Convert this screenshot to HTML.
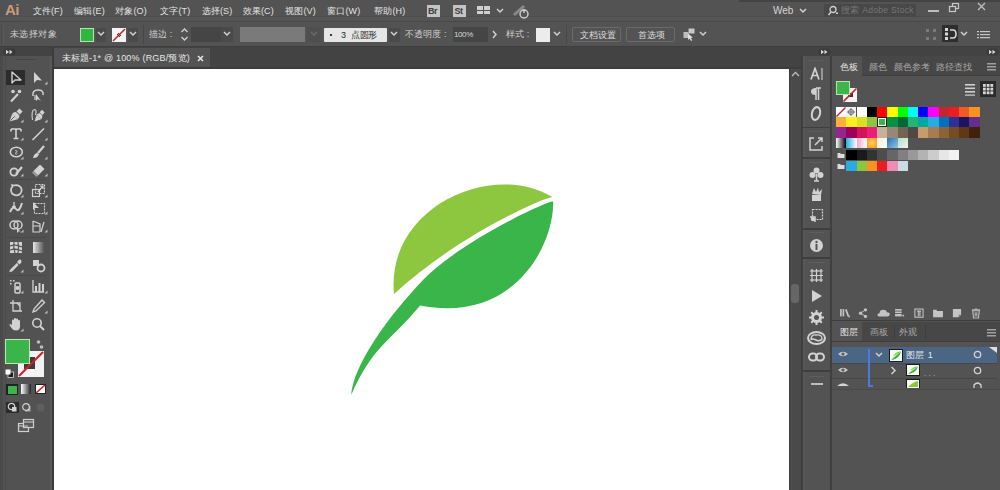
<!DOCTYPE html>
<html><head><meta charset="utf-8">
<style>
*{margin:0;padding:0;box-sizing:border-box}
html,body{width:1000px;height:490px;overflow:hidden;background:#535353;font-family:"Liberation Sans",sans-serif;color:#e0e0e0;font-size:10px}
.a{position:absolute}
.t{position:absolute;white-space:nowrap;font-weight:500}
</style></head><body>
<div class="a" style="left:0px;top:0px;width:1000px;height:22px;background:#535353;"></div>
<div class="a" style="left:0px;top:16px;width:1000px;height:1px;background:#4d4d4d;"></div>
<div class="a" style="left:0px;top:17px;width:1000px;height:3px;background:#565656;"></div>
<div class="a" style="left:0px;top:21px;width:1000px;height:1px;background:#4a4a4a;"></div>
<div class="a" style="left:0px;top:22px;width:1000px;height:1px;background:#454545;"></div>
<div class="a" style="left:0px;top:0px;width:22px;height:17px;background:#4f5257;"></div>
<div class="t" style="left:5px;top:1.5px;font-size:15px;line-height:16px;color:#d09a72;font-weight:bold;letter-spacing:-0.5px">Ai</div>
<div class="t" style="left:32.5px;top:6.0px;font-size:9px;line-height:10px;color:#e2e2e2;letter-spacing:0.2px">文件(F)</div>
<div class="t" style="left:74px;top:6.0px;font-size:9px;line-height:10px;color:#e2e2e2;letter-spacing:0.2px">编辑(E)</div>
<div class="t" style="left:115px;top:6.0px;font-size:9px;line-height:10px;color:#e2e2e2;letter-spacing:0.2px">对象(O)</div>
<div class="t" style="left:160px;top:6.0px;font-size:9px;line-height:10px;color:#e2e2e2;letter-spacing:0.2px">文字(T)</div>
<div class="t" style="left:201.5px;top:6.0px;font-size:9px;line-height:10px;color:#e2e2e2;letter-spacing:0.2px">选择(S)</div>
<div class="t" style="left:242.5px;top:6.0px;font-size:9px;line-height:10px;color:#e2e2e2;letter-spacing:0.2px">效果(C)</div>
<div class="t" style="left:285px;top:6.0px;font-size:9px;line-height:10px;color:#e2e2e2;letter-spacing:0.2px">视图(V)</div>
<div class="t" style="left:327px;top:6.0px;font-size:9px;line-height:10px;color:#e2e2e2;letter-spacing:0.2px">窗口(W)</div>
<div class="t" style="left:374px;top:6.0px;font-size:9px;line-height:10px;color:#e2e2e2;letter-spacing:0.2px">帮助(H)</div>
<div class="a" style="left:427px;top:4.5px;width:13px;height:12.5px;background:#c4c4c4;"></div>
<div class="t" style="left:428px;top:6.0px;font-size:9px;line-height:10px;color:#3e3e3e;font-weight:bold;letter-spacing:-0.5px">Br</div>
<div class="a" style="left:453px;top:4.5px;width:13px;height:12.5px;background:#c4c4c4;"></div>
<div class="t" style="left:454.5px;top:6.0px;font-size:9px;line-height:10px;color:#3e3e3e;font-weight:bold;letter-spacing:-0.5px">St</div>
<div class="a" style="left:477px;top:6px;width:6px;height:3.5px;background:#cfcfcf;"></div>
<div class="a" style="left:484px;top:6px;width:6px;height:3.5px;background:#cfcfcf;"></div>
<div class="a" style="left:477px;top:10.5px;width:6px;height:3.5px;background:#cfcfcf;"></div>
<div class="a" style="left:484px;top:10.5px;width:6px;height:3.5px;background:#cfcfcf;"></div>
<svg class="a" style="left:496px;top:8px;" width="8" height="6" viewBox="0 0 8 6"><path d="M1,1 L4,4 L7,1" stroke="#d0d0d0" stroke-width="1.5" fill="none"/></svg>
<svg class="a" style="left:512px;top:3px;" width="19" height="16" viewBox="0 0 19 16"><path d="M2,12 L12,3" stroke="#8a8a8a" stroke-width="3"/><circle cx="12" cy="11" r="4" stroke="#d0d0d0" stroke-width="1.4" fill="#535353"/><path d="M12,6 V10" stroke="#d0d0d0" stroke-width="1.4"/></svg>
<div class="t" style="left:773px;top:4.5px;font-size:10px;line-height:11px;color:#d4d4d4;">Web</div>
<svg class="a" style="left:799px;top:8px;" width="8" height="6" viewBox="0 0 8 6"><path d="M1,1 L4,4 L7,1" stroke="#d0d0d0" stroke-width="1.5" fill="none"/></svg>
<div class="a" style="left:824px;top:4px;width:92px;height:13px;background:#484848;border-radius:1px"></div>
<svg class="a" style="left:826px;top:4px;" width="14" height="13" viewBox="0 0 14 13"><circle cx="7" cy="5.5" r="3" stroke="#d0d0d0" stroke-width="1.3" fill="none"/><path d="M5,8 L2.5,11" stroke="#d0d0d0" stroke-width="1.5"/><rect x="10" y="8.5" width="2" height="1.5" fill="#d0d0d0"/></svg>
<div class="t" style="left:841px;top:5.8px;font-size:8.5px;line-height:9.5px;color:#767676;letter-spacing:0.3px">搜索 Adobe Stock</div>
<div class="a" style="left:739px;top:0px;width:261px;height:1.5px;background:#444;"></div>
<div class="a" style="left:928px;top:9.5px;width:11px;height:2px;background:#bdbdbd;"></div>
<svg class="a" style="left:948px;top:2px;" width="13" height="12" viewBox="0 0 13 12"><rect x="4.5" y="1.5" width="6" height="5" stroke="#c8c8c8" stroke-width="1.2" fill="none"/><rect x="1.5" y="4.5" width="6" height="5" stroke="#c8c8c8" stroke-width="1.2" fill="#535353"/></svg>
<svg class="a" style="left:976px;top:1px;" width="11" height="11" viewBox="0 0 11 11"><path d="M2,2 L9,9 M9,2 L2,9" stroke="#bdbdbd" stroke-width="1.3"/></svg>
<div class="a" style="left:0px;top:22px;width:1000px;height:24px;background:#535353;"></div>
<div class="a" style="left:0px;top:46px;width:1000px;height:1px;background:#3e3e3e;"></div>
<div class="a" style="left:1px;top:25px;width:1px;height:19px;background:#484848;"></div>
<div class="a" style="left:3px;top:25px;width:1px;height:19px;background:#5a5a5a;"></div>
<div class="t" style="left:9.5px;top:29.0px;font-size:9px;line-height:10px;color:#cfcfcf;letter-spacing:0.6px">未选择对象</div>
<div class="a" style="left:80px;top:28px;width:14px;height:14px;background:#2fb740;border:1px solid #b8e2b0"></div>
<div class="a" style="left:96px;top:28px;width:10px;height:14px;background:#4a4a4a;"></div>
<svg class="a" style="left:97px;top:31px;" width="8" height="6" viewBox="0 0 8 6"><path d="M1,1 L4,4 L7,1" stroke="#d0d0d0" stroke-width="1.5" fill="none"/></svg>
<svg class="a" style="left:112px;top:28px;" width="14" height="14" viewBox="0 0 14 14"><rect x="0" y="0" width="14" height="14" fill="#f4f4f4"/><path d="M1,13 L13,1" stroke="#c0282d" stroke-width="1.6"/><path d="M5,6 L8,9 M6,5 L9,8" stroke="#8a1a1a" stroke-width="1"/></svg>
<div class="a" style="left:128px;top:28px;width:10px;height:14px;background:#4a4a4a;"></div>
<svg class="a" style="left:129px;top:31px;" width="8" height="6" viewBox="0 0 8 6"><path d="M1,1 L4,4 L7,1" stroke="#d0d0d0" stroke-width="1.5" fill="none"/></svg>
<div class="a" style="left:143px;top:25px;width:1px;height:19px;background:#474747;"></div>
<div class="t" style="left:149px;top:29.0px;font-size:9px;line-height:10px;color:#cfcfcf;letter-spacing:0.1px">描边 :</div>
<svg class="a" style="left:180px;top:27px;" width="9" height="15" viewBox="0 0 9 15"><path d="M1.5,5 L4.5,2 L7.5,5 M1.5,10 L4.5,13 L7.5,10" stroke="#d0d0d0" stroke-width="1.4" fill="none"/></svg>
<div class="a" style="left:191px;top:27px;width:30px;height:15px;background:#454545;"></div>
<div class="a" style="left:221px;top:27px;width:12px;height:15px;background:#4a4a4a;"></div>
<svg class="a" style="left:223px;top:31px;" width="8" height="6" viewBox="0 0 8 6"><path d="M1,1 L4,4 L7,1" stroke="#d0d0d0" stroke-width="1.5" fill="none"/></svg>
<div class="a" style="left:240px;top:27px;width:65px;height:15px;background:#7a7a7a;"></div>
<div class="a" style="left:307px;top:27px;width:14px;height:15px;background:#4f4f4f;"></div>
<svg class="a" style="left:310px;top:31px;" width="8" height="6" viewBox="0 0 8 6"><path d="M1,1 L4,4 L7,1" stroke="#6a6a6a" stroke-width="1.5" fill="none"/></svg>
<div class="a" style="left:324px;top:28px;width:63px;height:14px;background:#e6e6e6;border-radius:1px"></div>
<div class="a" style="left:330px;top:34px;width:2px;height:2px;background:#3a3a3a;"></div>
<div class="t" style="left:341px;top:30.0px;font-size:9px;line-height:10px;color:#2a2a2a;">3</div>
<div class="t" style="left:351px;top:30.0px;font-size:9px;line-height:10px;color:#2a2a2a;letter-spacing:-0.3px">点圆形</div>
<div class="a" style="left:389px;top:28px;width:11px;height:14px;background:#4a4a4a;"></div>
<svg class="a" style="left:390px;top:31px;" width="8" height="6" viewBox="0 0 8 6"><path d="M1,1 L4,4 L7,1" stroke="#d0d0d0" stroke-width="1.5" fill="none"/></svg>
<div class="t" style="left:405px;top:29.0px;font-size:9px;line-height:10px;color:#cfcfcf;letter-spacing:0.1px">不透明度 :</div>
<div class="a" style="left:453px;top:27px;width:35px;height:15px;background:#454545;"></div>
<div class="t" style="left:454px;top:29.5px;font-size:8px;line-height:9px;color:#d8d8d8;letter-spacing:-0.4px">100%</div>
<svg class="a" style="left:491px;top:30px;" width="8" height="9" viewBox="0 0 8 9"><path d="M2,1 L5,4.5 L2,8" stroke="#d0d0d0" stroke-width="1.5" fill="none"/></svg>
<div class="t" style="left:506px;top:29.0px;font-size:9px;line-height:10px;color:#cfcfcf;letter-spacing:0.1px">样式 :</div>
<div class="a" style="left:536px;top:28px;width:14px;height:14px;background:#ececec;"></div>
<svg class="a" style="left:553px;top:31px;" width="8" height="6" viewBox="0 0 8 6"><path d="M1,1 L4,4 L7,1" stroke="#d0d0d0" stroke-width="1.5" fill="none"/></svg>
<div class="a" style="left:566px;top:25px;width:1px;height:19px;background:#474747;"></div>
<div class="a" style="left:572px;top:27px;width:49px;height:15px;background:#535353;border:1px solid #6a6a6a;border-radius:2px"></div>
<div class="t" style="left:580px;top:29.5px;font-size:9px;line-height:10px;color:#dcdcdc;">文档设置</div>
<div class="a" style="left:626px;top:27px;width:49px;height:15px;background:#535353;border:1px solid #6a6a6a;border-radius:2px"></div>
<div class="t" style="left:638px;top:29.5px;font-size:9px;line-height:10px;color:#dcdcdc;">首选项</div>
<svg class="a" style="left:682px;top:26px;" width="14" height="16" viewBox="0 0 14 16"><rect x="6.5" y="2.5" width="6" height="5" fill="#c8c8c8"/><rect x="1.5" y="6" width="5" height="6" fill="#bdbdbd"/><path d="M6,7.5 L6,14 L7.5,12.5 L9,15 L10.2,14.3 L8.8,12 L10.8,11.5 Z" fill="#e0e0e0"/></svg>
<svg class="a" style="left:698.5px;top:31px;" width="8" height="6" viewBox="0 0 8 6"><path d="M1,1 L4,4 L7,1" stroke="#d0d0d0" stroke-width="1.5" fill="none"/></svg>
<svg class="a" style="left:925px;top:27px;" width="13" height="15" viewBox="0 0 13 15"><g fill="#7a7a7a"><rect x="1" y="2" width="3" height="3"/><rect x="8" y="2" width="3" height="3"/><rect x="1" y="10" width="3" height="3"/><rect x="8" y="10" width="3" height="3"/></g></svg>
<div class="a" style="left:942px;top:25px;width:16px;height:17px;background:#2e2e2e;"></div>
<svg class="a" style="left:942px;top:25px;" width="16" height="17" viewBox="0 0 16 17"><g fill="#d8d8d8"><rect x="3" y="3" width="3" height="3"/><rect x="3" y="7.5" width="3" height="3"/><rect x="3" y="12" width="3" height="3"/></g><path d="M8,5 H11 Q14,5 14,9 Q14,13 11,13 H8" stroke="#d8d8d8" stroke-width="1.6" fill="none"/></svg>
<svg class="a" style="left:960px;top:31px;" width="8" height="6" viewBox="0 0 8 6"><path d="M1,1 L4,4 L7,1" stroke="#d0d0d0" stroke-width="1.5" fill="none"/></svg>
<svg class="a" style="left:976px;top:29px;" width="15" height="12" viewBox="0 0 15 12"><g fill="#c8c8c8"><rect x="1" y="2" width="2" height="1.2"/><rect x="1" y="5" width="2" height="1.2"/><rect x="1" y="8" width="2" height="1.2"/><rect x="4" y="2" width="10" height="1.2"/><rect x="4" y="5" width="10" height="1.2"/><rect x="4" y="8" width="10" height="1.2"/></g></svg>
<div class="a" style="left:54px;top:47px;width:747px;height:22px;background:#434343;"></div>
<div class="a" style="left:54px;top:48px;width:156px;height:19px;background:#535353;"></div>
<div class="a" style="left:54px;top:67px;width:747px;height:2px;background:#3c3c3c;"></div>
<div class="t" style="left:61.5px;top:53.0px;font-size:9px;line-height:10px;color:#e6e6e6;letter-spacing:0.2px">未标题-1* @ 100% (RGB/预览)</div>
<svg class="a" style="left:197px;top:55px;" width="7" height="7" viewBox="0 0 7 7"><path d="M1,1 L6,6 M6,1 L1,6" stroke="#e6e6e6" stroke-width="1.6"/></svg>
<div class="a" style="left:54px;top:69px;width:735px;height:421px;background:#ffffff;"></div>
<div class="a" style="left:0px;top:47px;width:52px;height:443px;background:#525252;"></div>
<div class="a" style="left:0px;top:47px;width:52px;height:9px;background:#434343;"></div>
<svg class="a" style="left:3px;top:48px;" width="13" height="8" viewBox="0 0 13 8"><rect x="0.5" y="0.5" width="12" height="7" rx="3.5" fill="#3a3a3a"/><path d="M3,1.8 L6,4 L3,6.2 Z M6.5,1.8 L9.5,4 L6.5,6.2 Z" fill="#d8d8d8"/></svg>
<div class="a" style="left:0px;top:56px;width:2.5px;height:434px;background:#4a4a4a;"></div>
<div class="a" style="left:4.5px;top:56px;width:1.5px;height:434px;background:#4a4a4a;"></div>
<div class="a" style="left:50px;top:56px;width:1.5px;height:434px;background:#5a5a5a;"></div>
<div class="a" style="left:51.5px;top:47px;width:2.5px;height:443px;background:#3c3c3c;"></div>
<div class="a" style="left:16px;top:59px;width:20px;height:1px;background:#464646;"></div>
<div class="a" style="left:789px;top:69px;width:1px;height:421px;background:#3c3c3c;"></div>
<div class="a" style="left:790px;top:69px;width:11px;height:421px;background:#4a4a4a;"></div>
<svg class="a" style="left:791px;top:71px;" width="9" height="7" viewBox="0 0 9 7"><path d="M1,5 L4.5,1.5 L8,5" stroke="#bdbdbd" stroke-width="1.3" fill="none"/></svg>
<div class="a" style="left:791px;top:284px;width:8px;height:19px;background:#666;border-radius:3px"></div>
<div class="a" style="left:801px;top:47px;width:2px;height:443px;background:#3e3e3e;"></div>
<div class="a" style="left:803px;top:47px;width:2px;height:443px;background:#585858;"></div>
<div class="a" style="left:805px;top:47px;width:25px;height:443px;background:#535353;"></div>
<div class="a" style="left:830px;top:47px;width:2px;height:443px;background:#404040;"></div>
<div class="a" style="left:832px;top:47px;width:168px;height:443px;background:#535353;"></div>
<div class="a" style="left:801px;top:47px;width:31px;height:9px;background:#434343;"></div>
<svg class="a" style="left:818px;top:48px;" width="13" height="8" viewBox="0 0 13 8"><rect x="0.5" y="0.5" width="12" height="7" rx="3.5" fill="#3a3a3a"/><path d="M3,1.8 L6,4 L3,6.2 Z M6.5,1.8 L9.5,4 L6.5,6.2 Z" fill="#d8d8d8"/></svg>
<div class="a" style="left:832px;top:47px;width:168px;height:9px;background:#434343;"></div>
<svg class="a" style="left:986px;top:48px;" width="13" height="8" viewBox="0 0 13 8"><rect x="0.5" y="0.5" width="12" height="7" rx="3.5" fill="#3a3a3a"/><path d="M3,1.8 L6,4 L3,6.2 Z M6.5,1.8 L9.5,4 L6.5,6.2 Z" fill="#d8d8d8"/></svg>
<div class="a" style="left:862px;top:56px;width:138px;height:20px;background:#474747;"></div>
<div class="a" style="left:832px;top:75px;width:168px;height:1px;background:#3e3e3e;"></div>
<div class="a" style="left:832px;top:56px;width:30px;height:20px;background:#535353;"></div>
<div class="t" style="left:840px;top:62.0px;font-size:9px;line-height:10px;color:#e4e4e4;">色板</div>
<div class="t" style="left:869px;top:62.0px;font-size:9px;line-height:10px;color:#a8a8a8;">颜色</div>
<div class="t" style="left:894px;top:62.0px;font-size:9px;line-height:10px;color:#a8a8a8;">颜色参考</div>
<div class="t" style="left:936px;top:62.0px;font-size:9px;line-height:10px;color:#a8a8a8;">路径查找</div>
<div class="a" style="left:891px;top:59px;width:1px;height:14px;background:#444;"></div>
<div class="a" style="left:931px;top:59px;width:1px;height:14px;background:#444;"></div>
<svg class="a" style="left:986px;top:62px;" width="11" height="9" viewBox="0 0 11 9"><g fill="#a0a0a0"><rect x="1" y="1" width="9" height="1.5"/><rect x="1" y="4" width="9" height="1.5"/><rect x="1" y="7" width="9" height="1.5"/></g></svg>
<svg class="a" style="left:843px;top:88px;" width="15" height="15" viewBox="0 0 15 15"><rect x="0" y="0" width="14" height="14" fill="#f4f4f4"/><rect x="5" y="5" width="5" height="4" fill="#353535"/><path d="M0.5,13.5 L13.5,0.5" stroke="#d0202a" stroke-width="1.6"/></svg>
<div class="a" style="left:836px;top:81px;width:14px;height:14px;background:#3cb54a;border:1px solid #b8e2b0"></div>
<svg class="a" style="left:964px;top:82px;" width="12" height="14" viewBox="0 0 12 14"><g fill="#cfcfcf"><rect x="1" y="2" width="10" height="1.6"/><rect x="1" y="5.5" width="10" height="1.6"/><rect x="1" y="9" width="10" height="1.6"/><rect x="1" y="12.5" width="10" height="1.2"/></g></svg>
<div class="a" style="left:980px;top:81px;width:16px;height:16px;background:#2b2b2b;"></div>
<svg class="a" style="left:980px;top:81px;" width="16" height="16" viewBox="0 0 16 16"><g fill="#d8d8d8"><rect x="3.0" y="3.0" width="2.8" height="2.8"/><rect x="3.0" y="6.7" width="2.8" height="2.8"/><rect x="3.0" y="10.4" width="2.8" height="2.8"/><rect x="6.7" y="3.0" width="2.8" height="2.8"/><rect x="6.7" y="6.7" width="2.8" height="2.8"/><rect x="6.7" y="10.4" width="2.8" height="2.8"/><rect x="10.4" y="3.0" width="2.8" height="2.8"/><rect x="10.4" y="6.7" width="2.8" height="2.8"/><rect x="10.4" y="10.4" width="2.8" height="2.8"/></g></svg>
<svg class="a" style="left:836.0px;top:106.5px;" width="10" height="10" viewBox="0 0 10 10"><rect width="10" height="10" fill="#fff"/><path d="M0.5,9.5 L9.5,0.5" stroke="#d0202a" stroke-width="1.4"/></svg>
<svg class="a" style="left:846.25px;top:106.5px;" width="10" height="10" viewBox="0 0 10 10"><rect width="10" height="10" fill="#f0f0f0"/><circle cx="5" cy="5" r="2.5" stroke="#555" stroke-width="0.8" fill="none"/><path d="M5,1 V9 M1,5 H9" stroke="#555" stroke-width="0.8"/></svg>
<div class="a" style="left:856.50px;top:106.5px;width:10.3px;height:10.4px;background:#ffffff"></div>
<div class="a" style="left:866.75px;top:106.5px;width:10.3px;height:10.4px;background:#000000"></div>
<div class="a" style="left:877.00px;top:106.5px;width:10.3px;height:10.4px;background:#ff0000"></div>
<div class="a" style="left:887.25px;top:106.5px;width:10.3px;height:10.4px;background:#ffff00"></div>
<div class="a" style="left:897.50px;top:106.5px;width:10.3px;height:10.4px;background:#00ff00"></div>
<div class="a" style="left:907.75px;top:106.5px;width:10.3px;height:10.4px;background:#00ffff"></div>
<div class="a" style="left:918.00px;top:106.5px;width:10.3px;height:10.4px;background:#0000ff"></div>
<div class="a" style="left:928.25px;top:106.5px;width:10.3px;height:10.4px;background:#ff00ff"></div>
<div class="a" style="left:938.50px;top:106.5px;width:10.3px;height:10.4px;background:#c1272d"></div>
<div class="a" style="left:948.75px;top:106.5px;width:10.3px;height:10.4px;background:#ed1c24"></div>
<div class="a" style="left:959.00px;top:106.5px;width:10.3px;height:10.4px;background:#f15a24"></div>
<div class="a" style="left:969.25px;top:106.5px;width:10.3px;height:10.4px;background:#f7931e"></div>
<div class="a" style="left:836.00px;top:116.8px;width:10.3px;height:10.4px;background:#fbb03b"></div>
<div class="a" style="left:846.25px;top:116.8px;width:10.3px;height:10.4px;background:#fcee21"></div>
<div class="a" style="left:856.50px;top:116.8px;width:10.3px;height:10.4px;background:#d9e021"></div>
<div class="a" style="left:866.75px;top:116.8px;width:10.3px;height:10.4px;background:#8cc63f"></div>
<div class="a" style="left:877.00px;top:116.8px;width:10.3px;height:10.4px;background:#39b54a"></div>
<div class="a" style="left:887.25px;top:116.8px;width:10.3px;height:10.4px;background:#009245"></div>
<div class="a" style="left:897.50px;top:116.8px;width:10.3px;height:10.4px;background:#006837"></div>
<div class="a" style="left:907.75px;top:116.8px;width:10.3px;height:10.4px;background:#22b573"></div>
<div class="a" style="left:918.00px;top:116.8px;width:10.3px;height:10.4px;background:#00a99d"></div>
<div class="a" style="left:928.25px;top:116.8px;width:10.3px;height:10.4px;background:#29abe2"></div>
<div class="a" style="left:938.50px;top:116.8px;width:10.3px;height:10.4px;background:#0071bc"></div>
<div class="a" style="left:948.75px;top:116.8px;width:10.3px;height:10.4px;background:#2e3192"></div>
<div class="a" style="left:959.00px;top:116.8px;width:10.3px;height:10.4px;background:#1b1464"></div>
<div class="a" style="left:969.25px;top:116.8px;width:10.3px;height:10.4px;background:#662d91"></div>
<div class="a" style="left:836.00px;top:127.4px;width:10.3px;height:10.4px;background:#93278f"></div>
<div class="a" style="left:846.25px;top:127.4px;width:10.3px;height:10.4px;background:#9e005d"></div>
<div class="a" style="left:856.50px;top:127.4px;width:10.3px;height:10.4px;background:#d4145a"></div>
<div class="a" style="left:866.75px;top:127.4px;width:10.3px;height:10.4px;background:#ed1e79"></div>
<div class="a" style="left:877.00px;top:127.4px;width:10.3px;height:10.4px;background:#c7b299"></div>
<div class="a" style="left:887.25px;top:127.4px;width:10.3px;height:10.4px;background:#998675"></div>
<div class="a" style="left:897.50px;top:127.4px;width:10.3px;height:10.4px;background:#736357"></div>
<div class="a" style="left:907.75px;top:127.4px;width:10.3px;height:10.4px;background:#534741"></div>
<div class="a" style="left:918.00px;top:127.4px;width:10.3px;height:10.4px;background:#c69c6d"></div>
<div class="a" style="left:928.25px;top:127.4px;width:10.3px;height:10.4px;background:#a67c52"></div>
<div class="a" style="left:938.50px;top:127.4px;width:10.3px;height:10.4px;background:#8c6239"></div>
<div class="a" style="left:948.75px;top:127.4px;width:10.3px;height:10.4px;background:#754c24"></div>
<div class="a" style="left:959.00px;top:127.4px;width:10.3px;height:10.4px;background:#603813"></div>
<div class="a" style="left:969.25px;top:127.4px;width:10.3px;height:10.4px;background:#42210b"></div>
<div class="a" style="left:877.00px;top:116.8px;width:10.3px;height:10.4px;border:1px solid #1d1d1d;box-shadow:inset 0 0 0 1px #fff"></div>
<div class="a" style="left:836.00px;top:138px;width:10.3px;height:10.4px;background:linear-gradient(90deg,#fff,#000)"></div>
<div class="a" style="left:846.25px;top:138px;width:10.3px;height:10.4px;background:linear-gradient(90deg,#29abe2,#fff)"></div>
<div class="a" style="left:856.50px;top:138px;width:10.3px;height:10.4px;background:linear-gradient(90deg,#f4a7c7,#fff)"></div>
<div class="a" style="left:866.75px;top:138px;width:10.3px;height:10.4px;background:radial-gradient(#ffd35a,#f7931e)"></div>
<div class="a" style="left:877.00px;top:138px;width:10.3px;height:10.4px;background:linear-gradient(135deg,#f4f0e0,#fff)"></div>
<div class="a" style="left:887.25px;top:138px;width:10.3px;height:10.4px;background:linear-gradient(135deg,#2a6fb0,#8ec6ea)"></div>
<div class="a" style="left:897.50px;top:138px;width:10.3px;height:10.4px;background:linear-gradient(135deg,#b8dcc0,#eef6ef)"></div>
<svg class="a" style="left:836px;top:149.5px;" width="10" height="10" viewBox="0 0 10 10"><path d="M1.5,3 H4 L5,4 H8.5 V8 H1.5 Z" fill="#dcdcdc"/></svg>
<div class="a" style="left:846.25px;top:149.5px;width:10.3px;height:10.4px;background:#000000"></div>
<div class="a" style="left:856.50px;top:149.5px;width:10.3px;height:10.4px;background:#1a1a1a"></div>
<div class="a" style="left:866.75px;top:149.5px;width:10.3px;height:10.4px;background:#333333"></div>
<div class="a" style="left:877.00px;top:149.5px;width:10.3px;height:10.4px;background:#4d4d4d"></div>
<div class="a" style="left:887.25px;top:149.5px;width:10.3px;height:10.4px;background:#666666"></div>
<div class="a" style="left:897.50px;top:149.5px;width:10.3px;height:10.4px;background:#808080"></div>
<div class="a" style="left:907.75px;top:149.5px;width:10.3px;height:10.4px;background:#999999"></div>
<div class="a" style="left:918.00px;top:149.5px;width:10.3px;height:10.4px;background:#b3b3b3"></div>
<div class="a" style="left:928.25px;top:149.5px;width:10.3px;height:10.4px;background:#cccccc"></div>
<div class="a" style="left:938.50px;top:149.5px;width:10.3px;height:10.4px;background:#e6e6e6"></div>
<div class="a" style="left:948.75px;top:149.5px;width:10.3px;height:10.4px;background:#f2f2f2"></div>
<svg class="a" style="left:836px;top:161px;" width="10" height="10" viewBox="0 0 10 10"><path d="M1.5,3 H4 L5,4 H8.5 V8 H1.5 Z" fill="#dcdcdc"/></svg>
<div class="a" style="left:846.25px;top:161px;width:10.3px;height:10.4px;background:#29abe2"></div>
<div class="a" style="left:856.50px;top:161px;width:10.3px;height:10.4px;background:#8cc63f"></div>
<div class="a" style="left:866.75px;top:161px;width:10.3px;height:10.4px;background:#f7931e"></div>
<div class="a" style="left:877.00px;top:161px;width:10.3px;height:10.4px;background:#ed1c24"></div>
<div class="a" style="left:887.25px;top:161px;width:10.3px;height:10.4px;background:#f08cb4"></div>
<div class="a" style="left:897.50px;top:161px;width:10.3px;height:10.4px;background:#c8dce6"></div>
<svg class="a" style="left:838px;top:306px;transform:scale(0.82);transform-origin:50% 55%" width="14" height="14" viewBox="0 0 14 14"><g fill="#c4c4c4"><rect x="1" y="2" width="2" height="9"/><rect x="4" y="2" width="2" height="9"/><path d="M7,3 L9,2 L12,10 L10,11Z"/></g><rect x="11" y="10" width="2" height="2" fill="#c4c4c4"/></svg>
<svg class="a" style="left:857px;top:306px;transform:scale(0.82);transform-origin:50% 55%" width="12" height="14" viewBox="0 0 12 14"><circle cx="3" cy="7" r="2" fill="#c4c4c4"/><circle cx="9" cy="3" r="2" fill="#c4c4c4"/><circle cx="9" cy="11" r="2" fill="#c4c4c4"/><path d="M3,7 L9,3 M3,7 L9,11" stroke="#c4c4c4" stroke-width="1.2"/></svg>
<svg class="a" style="left:875px;top:306px;transform:scale(0.82);transform-origin:50% 55%" width="18" height="14" viewBox="0 0 18 14"><path d="M3,11 Q1,11 1,9 Q1,7 3.5,7 Q4,3 8,3 Q12,3 12.5,6 Q16,6 16,8.5 Q16,11 13.5,11 Z" fill="#c4c4c4"/></svg>
<svg class="a" style="left:893px;top:306px;transform:scale(0.82);transform-origin:50% 55%" width="14" height="14" viewBox="0 0 14 14"><g fill="#c4c4c4"><rect x="1" y="2" width="8" height="2"/><rect x="1" y="5" width="8" height="2"/><rect x="1" y="8" width="8" height="3"/><rect x="10" y="9" width="2" height="2"/></g></svg>
<svg class="a" style="left:912px;top:306px;transform:scale(0.82);transform-origin:50% 55%" width="14" height="14" viewBox="0 0 14 14"><rect x="2" y="2" width="10" height="10" stroke="#c4c4c4" stroke-width="1.3" fill="none"/><g fill="#c4c4c4"><rect x="4.5" y="4" width="5" height="1.3"/><rect x="5.5" y="4" width="1.3" height="7"/><rect x="7.5" y="4" width="1.3" height="7"/></g></svg>
<svg class="a" style="left:931px;top:306px;transform:scale(0.82);transform-origin:50% 55%" width="14" height="14" viewBox="0 0 14 14"><path d="M1,3 H5 L6,4.5 H13 V12 H1 Z" fill="#c4c4c4"/></svg>
<svg class="a" style="left:950px;top:306px;transform:scale(0.82);transform-origin:50% 55%" width="14" height="14" viewBox="0 0 14 14"><path d="M2,2 H12 V9 L9,12 H2 Z" fill="#c4c4c4"/><path d="M9,12 V9 H12" fill="#777"/></svg>
<svg class="a" style="left:969px;top:306px;transform:scale(0.82);transform-origin:50% 55%" width="14" height="14" viewBox="0 0 14 14"><path d="M3,4 H11 L10,13 H4 Z" stroke="#c4c4c4" stroke-width="1.3" fill="none"/><path d="M2,3 H12 M5.5,2 H8.5 M6,6 V11 M8,6 V11" stroke="#c4c4c4" stroke-width="1.2"/></svg>
<div class="a" style="left:832px;top:320px;width:168px;height:1px;background:#3e3e3e;"></div>
<div class="a" style="left:862px;top:322px;width:138px;height:20px;background:#474747;"></div>
<div class="a" style="left:832px;top:322px;width:30px;height:20px;background:#535353;"></div>
<div class="a" style="left:832px;top:341px;width:168px;height:1px;background:#3e3e3e;"></div>
<div class="t" style="left:840px;top:327.0px;font-size:9px;line-height:10px;color:#e4e4e4;">图层</div>
<div class="t" style="left:870px;top:327.0px;font-size:9px;line-height:10px;color:#a8a8a8;">画板</div>
<div class="t" style="left:899px;top:327.0px;font-size:9px;line-height:10px;color:#a8a8a8;">外观</div>
<div class="a" style="left:894px;top:325px;width:1px;height:14px;background:#3e3e3e;"></div>
<div class="a" style="left:925px;top:325px;width:1px;height:14px;background:#3e3e3e;"></div>
<svg class="a" style="left:986px;top:328px;" width="11" height="9" viewBox="0 0 11 9"><g fill="#a0a0a0"><rect x="1" y="1" width="9" height="1.5"/><rect x="1" y="4" width="9" height="1.5"/><rect x="1" y="7" width="9" height="1.5"/></g></svg>
<div class="a" style="left:832px;top:347px;width:165px;height:16px;background:#4b6584;"></div>
<div class="a" style="left:832px;top:363px;width:165px;height:1px;background:#474747;"></div>
<div class="a" style="left:832px;top:378px;width:165px;height:1px;background:#474747;"></div>
<svg class="a" style="left:837px;top:350px;" width="12" height="8" viewBox="0 0 12 8"><path d="M1,4 Q6,-0.5 11,4 Q6,8.5 1,4 Z" fill="#c8c8c8"/><circle cx="6" cy="4" r="1.6" fill="#5a5a5a"/></svg>
<svg class="a" style="left:837px;top:366px;" width="12" height="8" viewBox="0 0 12 8"><path d="M1,4 Q6,-0.5 11,4 Q6,8.5 1,4 Z" fill="#c8c8c8"/><circle cx="6" cy="4" r="1.6" fill="#5a5a5a"/></svg>
<svg class="a" style="left:836px;top:381px;" width="14" height="7" viewBox="0 0 14 7"><path d="M1,5 Q7,-0.5 13,5" fill="#d4d4d4"/></svg>
<div class="a" style="left:868px;top:349px;width:2px;height:37px;background:#4a7ae0;"></div>
<div class="a" style="left:868px;top:385px;width:5px;height:1.5px;background:#4a7ae0;"></div>
<svg class="a" style="left:875px;top:351.5px;" width="8" height="6" viewBox="0 0 8 6"><path d="M1,1 L4,4 L7,1" stroke="#d0d0d0" stroke-width="1.5" fill="none"/></svg>
<svg class="a" style="left:890px;top:358px;" width="7" height="9" viewBox="0 0 7 9"></svg>
<svg class="a" style="left:890px;top:366px;" width="7" height="9" viewBox="0 0 7 9"><path d="M1.5,1 L5,4.5 L1.5,8" stroke="#d0d0d0" stroke-width="1.5" fill="none"/></svg>
<svg class="a" style="left:889px;top:349px;" width="14" height="13" viewBox="0 0 14 13"><rect x="0" y="0" width="14" height="13" fill="#1a1a1a"/><rect x="1" y="1" width="12" height="11" fill="#f4faf2"/><path d="M2.5,10.5 Q7.0,6.5 12,2.5 Q11,9 3,11 Z" fill="#39b54a"/><path d="M4,7.5 Q7.0,2 12,2.5 Z" fill="#8dc63f"/></svg>
<div class="t" style="left:905.5px;top:350.0px;font-size:9px;line-height:10px;color:#e8e8e8;letter-spacing:0.6px">图层 1</div>
<svg class="a" style="left:906px;top:364px;" width="14" height="12" viewBox="0 0 14 12"><rect x="0" y="0" width="14" height="12" fill="#1a1a1a"/><rect x="1" y="1" width="12" height="10" fill="#f4faf2"/><path d="M2.5,9.5 Q7.0,6.0 12,2.5 Q11,8 3,10 Z" fill="#39b54a"/><path d="M4,7.0 Q7.0,2 12,2.5 Z" fill="#8dc63f"/></svg>
<div class="t" style="left:924px;top:368.5px;font-size:8px;line-height:9px;color:#bdbdbd;">. . .</div>
<svg class="a" style="left:906px;top:379px;" width="14" height="9" viewBox="0 0 14 9"><rect x="0" y="0" width="14" height="9" fill="#1a1a1a"/><rect x="1" y="1" width="12" height="8" fill="#f4faf2"/><path d="M2,8 Q7,3 12,2 L12,8 Z" fill="#8dc63f"/></svg>
<svg class="a" style="left:972px;top:349px;" width="11" height="11" viewBox="0 0 11 11"><circle cx="5.5" cy="5.5" r="3.2" stroke="#d4d4d4" stroke-width="1.3" fill="none"/></svg>
<svg class="a" style="left:972px;top:365px;" width="11" height="11" viewBox="0 0 11 11"><circle cx="5.5" cy="5.5" r="3.2" stroke="#d4d4d4" stroke-width="1.3" fill="none"/></svg>
<svg class="a" style="left:972px;top:381px;" width="11" height="7" viewBox="0 0 11 7"><path d="M2,7 V4 Q5.5,0 9,4 V7" stroke="#d4d4d4" stroke-width="1.3" fill="none"/></svg>
<svg class="a" style="left:989px;top:347px;" width="8" height="6" viewBox="0 0 8 6"><path d="M0,0 H8 V6 Z" fill="#e0e0e0"/></svg>
<div class="a" style="left:832px;top:389px;width:168px;height:1px;background:#4a4a4a;"></div>
<div class="a" style="left:803px;top:126.5px;width:27px;height:1.5px;background:#3e3e3e;"></div>
<div class="a" style="left:803px;top:157px;width:27px;height:1.5px;background:#3e3e3e;"></div>
<div class="a" style="left:803px;top:228px;width:27px;height:1.5px;background:#3e3e3e;"></div>
<div class="a" style="left:803px;top:257px;width:27px;height:1.5px;background:#3e3e3e;"></div>
<div class="a" style="left:803px;top:370px;width:27px;height:1.5px;background:#3e3e3e;"></div>
<div class="a" style="left:809px;top:59.5px;width:15px;height:1px;background:#5e5e5e;"></div>
<div class="a" style="left:809px;top:131px;width:15px;height:1px;background:#5e5e5e;"></div>
<div class="a" style="left:809px;top:161.5px;width:15px;height:1px;background:#5e5e5e;"></div>
<div class="a" style="left:809px;top:232px;width:15px;height:1px;background:#5e5e5e;"></div>
<div class="a" style="left:809px;top:262px;width:15px;height:1px;background:#5e5e5e;"></div>
<div class="a" style="left:809px;top:375.5px;width:15px;height:1px;background:#5e5e5e;"></div>
<svg class="a" style="left:809px;top:67px;" width="16" height="14" viewBox="0 0 16 14"><path d="M2,12.5 L6,1.5 L10,12.5 M3.6,8.5 H8.4" stroke="#d2d2d2" stroke-width="1.7" fill="none"/><path d="M13,1 V13" stroke="#d2d2d2" stroke-width="1.1"/></svg>
<svg class="a" style="left:809px;top:86px;" width="14" height="16" viewBox="0 0 14 16"><path d="M7,2 H12 M9.5,2 V14 M7,2 V14" stroke="#d2d2d2" stroke-width="1.5" fill="none"/><path d="M7,2 Q2,2 2,5.5 Q2,9 7,9 Z" fill="#d2d2d2"/></svg>
<svg class="a" style="left:809px;top:105px;" width="14" height="17" viewBox="0 0 14 17"><ellipse cx="7" cy="8.5" rx="4" ry="6.5" stroke="#d2d2d2" stroke-width="2" fill="none" transform="rotate(15 7 8.5)"/></svg>
<svg class="a" style="left:808px;top:136px;" width="17" height="16" viewBox="0 0 17 16"><path d="M6,2 H2 V14 H14 V10" stroke="#d2d2d2" stroke-width="1.5" fill="none"/><path d="M7,9 L14,2 M10,2 H14 V6" stroke="#d2d2d2" stroke-width="1.5" fill="none"/></svg>
<svg class="a" style="left:808px;top:166px;" width="17" height="17" viewBox="0 0 17 17"><circle cx="8.5" cy="4.5" r="3" fill="#d2d2d2"/><circle cx="4.5" cy="9" r="3" fill="#d2d2d2"/><circle cx="12.5" cy="9" r="3" fill="#d2d2d2"/><path d="M8.5,8 V15 M6,15 H11" stroke="#d2d2d2" stroke-width="1.5"/></svg>
<svg class="a" style="left:808px;top:186px;" width="17" height="17" viewBox="0 0 17 17"><path d="M4,8 L6,2 L8,6 L10,1.5 L11,6 L14,3 L13,9 Z" fill="#d2d2d2"/><rect x="4" y="9" width="9" height="6" fill="#d2d2d2"/></svg>
<svg class="a" style="left:808px;top:207px;" width="17" height="17" viewBox="0 0 17 17"><rect x="4.5" y="2.5" width="10" height="10" stroke="#d2d2d2" stroke-width="1.2" fill="none" stroke-dasharray="2 1"/><path d="M2,10 H7 V15" stroke="#d2d2d2" stroke-width="1.5" fill="none"/><circle cx="5" cy="12" r="2.2" fill="#d2d2d2"/></svg>
<svg class="a" style="left:808px;top:237px;" width="17" height="17" viewBox="0 0 17 17"><circle cx="8.5" cy="8.5" r="6.5" fill="#d2d2d2"/><circle cx="8.5" cy="5" r="1.2" fill="#535353"/><rect x="7.5" y="7" width="2" height="6" fill="#535353"/></svg>
<svg class="a" style="left:808px;top:267px;" width="17" height="17" viewBox="0 0 17 17"><g stroke="#d2d2d2" stroke-width="1.2" fill="none"><rect x="4" y="4" width="9" height="9"/><path d="M2,4 H4 M13,4 H15 M2,13 H4 M13,13 H15 M4,2 V4 M4,13 V15 M13,2 V4 M13,13 V15 M8.5,2 V15 M2,8.5 H15"/></g></svg>
<svg class="a" style="left:808px;top:288px;" width="17" height="16" viewBox="0 0 17 16"><path d="M4,2 L14,8 L4,14 Z" fill="#d2d2d2"/></svg>
<svg class="a" style="left:808px;top:309px;" width="17" height="17" viewBox="0 0 17 17"><circle cx="8.5" cy="8.5" r="5.5" fill="#d2d2d2"/><g stroke="#d2d2d2" stroke-width="2"><path d="M8.5,8.5 L16.0,8.5"/><path d="M8.5,8.5 L13.8,13.8"/><path d="M8.5,8.5 L8.5,16.0"/><path d="M8.5,8.5 L3.2,13.8"/><path d="M8.5,8.5 L1.0,8.5"/><path d="M8.5,8.5 L3.2,3.2"/><path d="M8.5,8.5 L8.5,1.0"/><path d="M8.5,8.5 L13.8,3.2"/></g><circle cx="8.5" cy="8.5" r="2.5" fill="#535353"/></svg>
<svg class="a" style="left:806px;top:329px;" width="21" height="17" viewBox="0 0 21 17"><ellipse cx="10.5" cy="9" rx="8.5" ry="6" stroke="#d2d2d2" stroke-width="2" fill="none"/><path d="M5,11 Q5,5 10,6 Q16,5 16,10 Q14,13 10,11 Q6,9 5,11" stroke="#d2d2d2" stroke-width="1.4" fill="none"/></svg>
<svg class="a" style="left:807px;top:350px;" width="20" height="14" viewBox="0 0 20 14"><rect x="2" y="3.5" width="8" height="7" rx="3.5" stroke="#d2d2d2" stroke-width="2" fill="none"/><rect x="9" y="3.5" width="8" height="7" rx="3.5" stroke="#d2d2d2" stroke-width="2" fill="none"/></svg>
<div class="a" style="left:811px;top:383px;width:12px;height:1.5px;background:#bdbdbd;"></div>
<div class="a" style="left:6px;top:69.5px;width:19px;height:15px;background:#2c2c2c;"></div>
<svg class="a" style="left:8px;top:69px;" width="16" height="16" viewBox="0 0 16 16"><path d="M4,3 L4,14 L7,11 L13,11 Z" stroke="#d2d2d2" stroke-width="1.4" fill="none" stroke-linejoin="round"/></svg>
<svg class="a" style="left:30px;top:69px;" width="16" height="16" viewBox="0 0 16 16"><path d="M4,3 L4,14 L7,11 L12,11.5 Z" fill="#d2d2d2"/></svg>
<svg class="a" style="left:44px;top:81px;" width="4" height="4" viewBox="0 0 4 4"><path d="M3.5,0.5 V3.5 H0.5 Z" fill="#bdbdbd"/></svg>
<svg class="a" style="left:8px;top:87px;" width="16" height="16" viewBox="0 0 16 16"><circle cx="5" cy="4.5" r="1.8" fill="#d2d2d2"/><circle cx="11.5" cy="4.5" r="1.8" fill="#d2d2d2"/><path d="M10,7 L3,14.5" stroke="#d2d2d2" stroke-width="2"/></svg>
<svg class="a" style="left:30px;top:87px;" width="16" height="16" viewBox="0 0 16 16"><path d="M3,9 Q2,3 8,3 Q14,3 13,8" stroke="#d2d2d2" stroke-width="1.5" fill="none"/><path d="M6,7 V14 L8,12 L11,14 Z" fill="#d2d2d2"/><path d="M5,8 V13" stroke="#d2d2d2" stroke-width="1.2"/></svg>
<svg class="a" style="left:8px;top:107px;" width="16" height="16" viewBox="0 0 16 16"><path d="M1.5,14.5 L4.2,6.8 L9.7,12.3 Z" fill="#d2d2d2"/><path d="M4.2,6.8 Q6,4.5 8.2,5.2 L11.3,8.3 Q12,10.5 9.7,12.3 Z" fill="#d2d2d2"/><path d="M8.6,4.2 L11.4,1.4 L14.6,4.6 L11.8,7.4 Z" fill="#d2d2d2"/><path d="M2.5,13.5 L6.5,9.5" stroke="#535353" stroke-width="0.9"/></svg>
<svg class="a" style="left:20px;top:119px;" width="4" height="4" viewBox="0 0 4 4"><path d="M3.5,0.5 V3.5 H0.5 Z" fill="#bdbdbd"/></svg>
<svg class="a" style="left:30px;top:107px;" width="16" height="16" viewBox="0 0 16 16"><path d="M4.5,14.5 L6.7,7.8 L11.2,12.3 Z" fill="#d2d2d2"/><path d="M6.7,7.8 Q8.2,5.8 10,6.3 L12.2,8.5 Q12.7,10.5 11.2,12.3 Z" fill="#d2d2d2"/><path d="M9.6,5.2 L12,2.8 L14.7,5.5 L12.3,7.9 Z" fill="#d2d2d2"/><path d="M2.5,13 Q1,3 4.5,2.5 Q7,2.5 5.5,8" stroke="#d2d2d2" stroke-width="1.1" fill="none"/></svg>
<svg class="a" style="left:44px;top:119px;" width="4" height="4" viewBox="0 0 4 4"><path d="M3.5,0.5 V3.5 H0.5 Z" fill="#bdbdbd"/></svg>
<svg class="a" style="left:8px;top:126px;" width="16" height="16" viewBox="0 0 16 16"><path d="M3,3 H13 M8,3 V12.5 M5.5,12.5 H10.5 M3,3 V5.5 M13,3 V5.5" stroke="#d2d2d2" stroke-width="1.6" fill="none"/></svg>
<svg class="a" style="left:20px;top:137px;" width="4" height="4" viewBox="0 0 4 4"><path d="M3.5,0.5 V3.5 H0.5 Z" fill="#bdbdbd"/></svg>
<svg class="a" style="left:30px;top:126px;" width="16" height="16" viewBox="0 0 16 16"><path d="M2.5,14 L14,2.5" stroke="#d2d2d2" stroke-width="1.6"/></svg>
<svg class="a" style="left:44px;top:137px;" width="4" height="4" viewBox="0 0 4 4"><path d="M3.5,0.5 V3.5 H0.5 Z" fill="#bdbdbd"/></svg>
<svg class="a" style="left:8px;top:144px;" width="16" height="16" viewBox="0 0 16 16"><ellipse cx="8.3" cy="8" rx="6" ry="4.7" stroke="#d2d2d2" stroke-width="1.6" fill="none"/><path d="M7,6.5 Q9.5,6 9,8 Q7,8.5 7.5,10 Q9,10.5 9.5,9.5" stroke="#d2d2d2" stroke-width="0.8" fill="none"/></svg>
<svg class="a" style="left:20px;top:156px;" width="4" height="4" viewBox="0 0 4 4"><path d="M3.5,0.5 V3.5 H0.5 Z" fill="#bdbdbd"/></svg>
<svg class="a" style="left:30px;top:144px;" width="16" height="16" viewBox="0 0 16 16"><path d="M14,2 L8,9" stroke="#d2d2d2" stroke-width="2.2"/><path d="M7,8.5 L9,10.5 Q7,14.5 3,14 Q4,10 7,8.5 Z" fill="#d2d2d2"/></svg>
<svg class="a" style="left:44px;top:156px;" width="4" height="4" viewBox="0 0 4 4"><path d="M3.5,0.5 V3.5 H0.5 Z" fill="#bdbdbd"/></svg>
<svg class="a" style="left:8px;top:162px;" width="16" height="16" viewBox="0 0 16 16"><circle cx="6" cy="10" r="3.6" stroke="#d2d2d2" stroke-width="1.8" fill="none"/><path d="M8,12 L14,5" stroke="#d2d2d2" stroke-width="2.2"/></svg>
<svg class="a" style="left:20px;top:173px;" width="4" height="4" viewBox="0 0 4 4"><path d="M3.5,0.5 V3.5 H0.5 Z" fill="#bdbdbd"/></svg>
<svg class="a" style="left:30px;top:162px;" width="16" height="16" viewBox="0 0 16 16"><path d="M10,2.5 L14.5,7 L8,13.5 L3.5,9 Z" fill="#d2d2d2"/><path d="M3.5,9 L8,13.5 L6.5,15 L2,10.5Z" fill="#9a9a9a"/></svg>
<svg class="a" style="left:44px;top:173px;" width="4" height="4" viewBox="0 0 4 4"><path d="M3.5,0.5 V3.5 H0.5 Z" fill="#bdbdbd"/></svg>
<div class="a" style="left:6px;top:179px;width:40px;height:1px;background:#4a4a4a;"></div>
<svg class="a" style="left:8px;top:182px;" width="16" height="16" viewBox="0 0 16 16"><path d="M4,5 Q2,8 4,11.5 Q8,15 12,12 Q15,8.5 12.5,5 Q10,2.5 6,3.5" stroke="#d2d2d2" stroke-width="1.7" fill="none"/><path d="M3,2 L7,3 L4,6 Z" fill="#d2d2d2"/></svg>
<svg class="a" style="left:20px;top:194px;" width="4" height="4" viewBox="0 0 4 4"><path d="M3.5,0.5 V3.5 H0.5 Z" fill="#bdbdbd"/></svg>
<svg class="a" style="left:30px;top:182px;" width="16" height="16" viewBox="0 0 16 16"><rect x="2.5" y="7.5" width="7" height="7" stroke="#d2d2d2" stroke-width="1.2" fill="none"/><rect x="5.5" y="2.5" width="9" height="9" stroke="#d2d2d2" stroke-width="1.1" fill="none" stroke-dasharray="2 1"/><path d="M8,10 L13,4 M10,4 H13 V7" stroke="#d2d2d2" stroke-width="1.2" fill="none"/></svg>
<svg class="a" style="left:44px;top:194px;" width="4" height="4" viewBox="0 0 4 4"><path d="M3.5,0.5 V3.5 H0.5 Z" fill="#bdbdbd"/></svg>
<svg class="a" style="left:8px;top:199px;" width="16" height="16" viewBox="0 0 16 16"><path d="M2,13 Q5,6 8,10 Q11,14 14,4" stroke="#d2d2d2" stroke-width="2" fill="none"/><path d="M6,3 L6,8 M4.5,7 L6,9 L7.5,7" stroke="#d2d2d2" stroke-width="1.3" fill="none"/></svg>
<svg class="a" style="left:20px;top:211px;" width="4" height="4" viewBox="0 0 4 4"><path d="M3.5,0.5 V3.5 H0.5 Z" fill="#bdbdbd"/></svg>
<svg class="a" style="left:30px;top:199px;" width="16" height="16" viewBox="0 0 16 16"><rect x="4.5" y="4.5" width="10" height="10" stroke="#d2d2d2" stroke-width="1.1" fill="none" stroke-dasharray="2 1"/><path d="M3,3 L3,11 L5,9 L9,9 Z" fill="#d2d2d2"/></svg>
<svg class="a" style="left:44px;top:211px;" width="4" height="4" viewBox="0 0 4 4"><path d="M3.5,0.5 V3.5 H0.5 Z" fill="#bdbdbd"/></svg>
<svg class="a" style="left:8px;top:218px;" width="16" height="16" viewBox="0 0 16 16"><circle cx="6" cy="7" r="4" stroke="#d2d2d2" stroke-width="1.5" fill="none"/><circle cx="10" cy="7" r="4" stroke="#d2d2d2" stroke-width="1.5" fill="none"/><path d="M9,9 V15 L11,13 L13,15 Z" fill="#d2d2d2"/></svg>
<svg class="a" style="left:20px;top:229px;" width="4" height="4" viewBox="0 0 4 4"><path d="M3.5,0.5 V3.5 H0.5 Z" fill="#bdbdbd"/></svg>
<svg class="a" style="left:30px;top:218px;" width="16" height="16" viewBox="0 0 16 16"><path d="M3,3 V14 H10 M3,3 L10,6 V14 M3,8 H10" stroke="#d2d2d2" stroke-width="1.2" fill="none"/><path d="M11,14 L14,4" stroke="#d2d2d2" stroke-width="1.2"/></svg>
<svg class="a" style="left:44px;top:229px;" width="4" height="4" viewBox="0 0 4 4"><path d="M3.5,0.5 V3.5 H0.5 Z" fill="#bdbdbd"/></svg>
<div class="a" style="left:6px;top:236.5px;width:40px;height:1px;background:#4a4a4a;"></div>
<svg class="a" style="left:8px;top:239px;" width="16" height="16" viewBox="0 0 16 16"><rect x="2" y="3" width="12" height="11" fill="#d2d2d2"/><path d="M2,7 Q8,5 14,8 M2,11 Q8,9 14,12 M6,3 Q5,8 7,14 M10,3 Q11,8 10,14" stroke="#535353" stroke-width="1.2" fill="none"/></svg>
<svg class="a" style="left:30px;top:239px;" width="16" height="16" viewBox="0 0 16 16"><defs><linearGradient id="gg" x1="0" y1="0" x2="1" y2="0"><stop offset="0" stop-color="#e8e8e8"/><stop offset="1" stop-color="#555"/></linearGradient></defs><rect x="3" y="3" width="11" height="11" fill="url(#gg)"/></svg>
<svg class="a" style="left:8px;top:257px;" width="16" height="16" viewBox="0 0 16 16"><path d="M12.5,2.5 Q14.5,4.5 12.5,6.5 L11.5,7.5 L9,5 L10,4 Q10.5,2 12.5,2.5 Z" fill="#d2d2d2"/><path d="M9.5,6.5 L3,13 L2.5,14 L3.5,14 L10,7.5" stroke="#d2d2d2" stroke-width="1.7" fill="none"/></svg>
<svg class="a" style="left:20px;top:269px;" width="4" height="4" viewBox="0 0 4 4"><path d="M3.5,0.5 V3.5 H0.5 Z" fill="#bdbdbd"/></svg>
<svg class="a" style="left:30px;top:257px;" width="16" height="16" viewBox="0 0 16 16"><rect x="3" y="3" width="6" height="6" fill="#d2d2d2"/><circle cx="11" cy="11" r="3.5" stroke="#d2d2d2" stroke-width="1.8" fill="none"/><path d="M6,6 L9,9" stroke="#d2d2d2"/></svg>
<div class="a" style="left:6px;top:274.5px;width:40px;height:1px;background:#4a4a4a;"></div>
<svg class="a" style="left:8px;top:278px;" width="16" height="16" viewBox="0 0 16 16"><g fill="#d2d2d2"><rect x="2" y="2" width="1.5" height="1.5"/><rect x="5" y="2" width="1.5" height="1.5"/><rect x="2" y="5" width="1.5" height="1.5"/></g><rect x="7" y="5" width="5" height="10" rx="1" stroke="#d2d2d2" stroke-width="1.5" fill="none"/><circle cx="9.5" cy="10" r="2" fill="#d2d2d2"/></svg>
<svg class="a" style="left:20px;top:290px;" width="4" height="4" viewBox="0 0 4 4"><path d="M3.5,0.5 V3.5 H0.5 Z" fill="#bdbdbd"/></svg>
<svg class="a" style="left:30px;top:278px;" width="16" height="16" viewBox="0 0 16 16"><path d="M3,2 V14 H14" stroke="#d2d2d2" stroke-width="1.3" fill="none"/><g fill="#d2d2d2"><rect x="5" y="8" width="2" height="6"/><rect x="8.5" y="5" width="2" height="9"/><rect x="12" y="6" width="2" height="8"/></g></svg>
<svg class="a" style="left:44px;top:290px;" width="4" height="4" viewBox="0 0 4 4"><path d="M3.5,0.5 V3.5 H0.5 Z" fill="#bdbdbd"/></svg>
<svg class="a" style="left:8px;top:298px;" width="16" height="16" viewBox="0 0 16 16"><path d="M5,2 V13 H14 M2,5 H12 V13" stroke="#d2d2d2" stroke-width="1.3" fill="none"/><path d="M9,5 L12,8" stroke="#d2d2d2" stroke-width="1.2"/></svg>
<svg class="a" style="left:30px;top:298px;" width="16" height="16" viewBox="0 0 16 16"><path d="M12,2 L14.5,4.5 L6,13 L3,14 L4,11 Z" stroke="#d2d2d2" stroke-width="1.4" fill="none"/></svg>
<svg class="a" style="left:44px;top:310px;" width="4" height="4" viewBox="0 0 4 4"><path d="M3.5,0.5 V3.5 H0.5 Z" fill="#bdbdbd"/></svg>
<svg class="a" style="left:8px;top:316px;" width="16" height="16" viewBox="0 0 16 16"><path d="M4,9 V4.5 Q4,3.5 5,3.5 Q6,3.5 6,4.5 V8 V3 Q6,2 7,2 Q8,2 8,3 V8 V3.5 Q8,2.5 9,2.5 Q10,2.5 10,3.5 V8 V5 Q10,4 11,4 Q12,4 12,5 V10 Q12,14.5 8,14.5 Q5,14.5 3.5,12 L1.5,9 Q1.5,8 2.5,8 Z" fill="#d2d2d2"/></svg>
<svg class="a" style="left:20px;top:328px;" width="4" height="4" viewBox="0 0 4 4"><path d="M3.5,0.5 V3.5 H0.5 Z" fill="#bdbdbd"/></svg>
<svg class="a" style="left:30px;top:316px;" width="16" height="16" viewBox="0 0 16 16"><circle cx="7" cy="7" r="4.2" stroke="#d2d2d2" stroke-width="1.6" fill="none"/><path d="M10,10 L14,14" stroke="#d2d2d2" stroke-width="2"/></svg>
<svg class="a" style="left:18px;top:351px;" width="27" height="26" viewBox="0 0 27 26"><rect x="0" y="0" width="26" height="26" fill="#f2f2f2"/><rect x="6" y="6" width="11" height="12" fill="#3c3c3c"/><path d="M1,25 L25,1" stroke="#d0202a" stroke-width="2.2"/></svg>
<div class="a" style="left:5px;top:339px;width:25px;height:25px;background:#3ab54a;border:1px solid #bfe6b8"></div>
<svg class="a" style="left:35px;top:339px;" width="10" height="12" viewBox="0 0 10 12"><circle cx="3.5" cy="3" r="1.8" fill="#bdbdbd"/><circle cx="6.5" cy="8" r="1.8" fill="#bdbdbd"/></svg>
<svg class="a" style="left:5px;top:369px;" width="9" height="9" viewBox="0 0 9 9"><rect x="3" y="3" width="5.5" height="5.5" fill="#1a1a1a" stroke="#ddd" stroke-width="0.8"/><rect x="0.5" y="0.5" width="5" height="5" fill="#fff"/></svg>
<div class="a" style="left:6px;top:384px;width:12px;height:11px;background:#222;"></div>
<div class="a" style="left:7.5px;top:385.5px;width:9px;height:8px;background:#3ab54a;"></div>
<div class="a" style="left:21px;top:384px;width:10px;height:10px;background:#333;background:linear-gradient(90deg,#fff,#222)"></div>
<svg class="a" style="left:35px;top:384px;" width="11" height="10" viewBox="0 0 11 10"><rect x="0" y="0" width="11" height="10" fill="#222"/><rect x="1" y="1" width="9" height="8" fill="#fff"/><path d="M1,9 L10,1" stroke="#d0202a" stroke-width="1.6"/></svg>
<div class="a" style="left:6px;top:402px;width:13px;height:11px;background:#2c2c2c;"></div>
<svg class="a" style="left:7px;top:402px;" width="11" height="11" viewBox="0 0 11 11"><circle cx="4.5" cy="4.5" r="3.2" stroke="#d2d2d2" stroke-width="1.2" fill="none"/><rect x="5" y="5" width="4.5" height="4.5" fill="#d2d2d2"/></svg>
<svg class="a" style="left:21px;top:402px;" width="11" height="11" viewBox="0 0 11 11"><rect x="4" y="4" width="5.5" height="5.5" fill="#a8a8a8"/><circle cx="5" cy="5" r="3.3" stroke="#d2d2d2" stroke-width="1.2" fill="#535353"/></svg>
<svg class="a" style="left:35px;top:402px;" width="11" height="11" viewBox="0 0 11 11"><circle cx="5.5" cy="5.5" r="4" fill="#5e5e5e"/></svg>
<svg class="a" style="left:17px;top:418px;" width="18" height="15" viewBox="0 0 18 15"><rect x="1.5" y="5.5" width="10" height="8" stroke="#cfcfcf" stroke-width="1.2" fill="#5a5a5a"/><rect x="6.5" y="1.5" width="10" height="8" stroke="#cfcfcf" stroke-width="1.2" fill="#5a5a5a"/><path d="M7,4 H16 M2,8 H11" stroke="#cfcfcf" stroke-width="1"/></svg>
<svg class="a" style="left:0px;top:0px;" width="1000" height="490" viewBox="0 0 1000 490"><path fill="#8dc63f" d="M552.3,197 C491.88,160.35 385.68,206.88 394.00,294.00 C457.01,235.67 543.00,197.92 552.30,197.00Z"/><path fill="#39b54a" d="M553,201.3 C543.84,202.42 458.72,242.68 423.00,280.00 C389.08,315.43 353.08,365.11 351.20,395.00 C372.98,346.27 386.84,344.94 420.10,305.60 C515.90,324.18 555.03,241.92 553.00,201.30Z"/></svg>
</body></html>
